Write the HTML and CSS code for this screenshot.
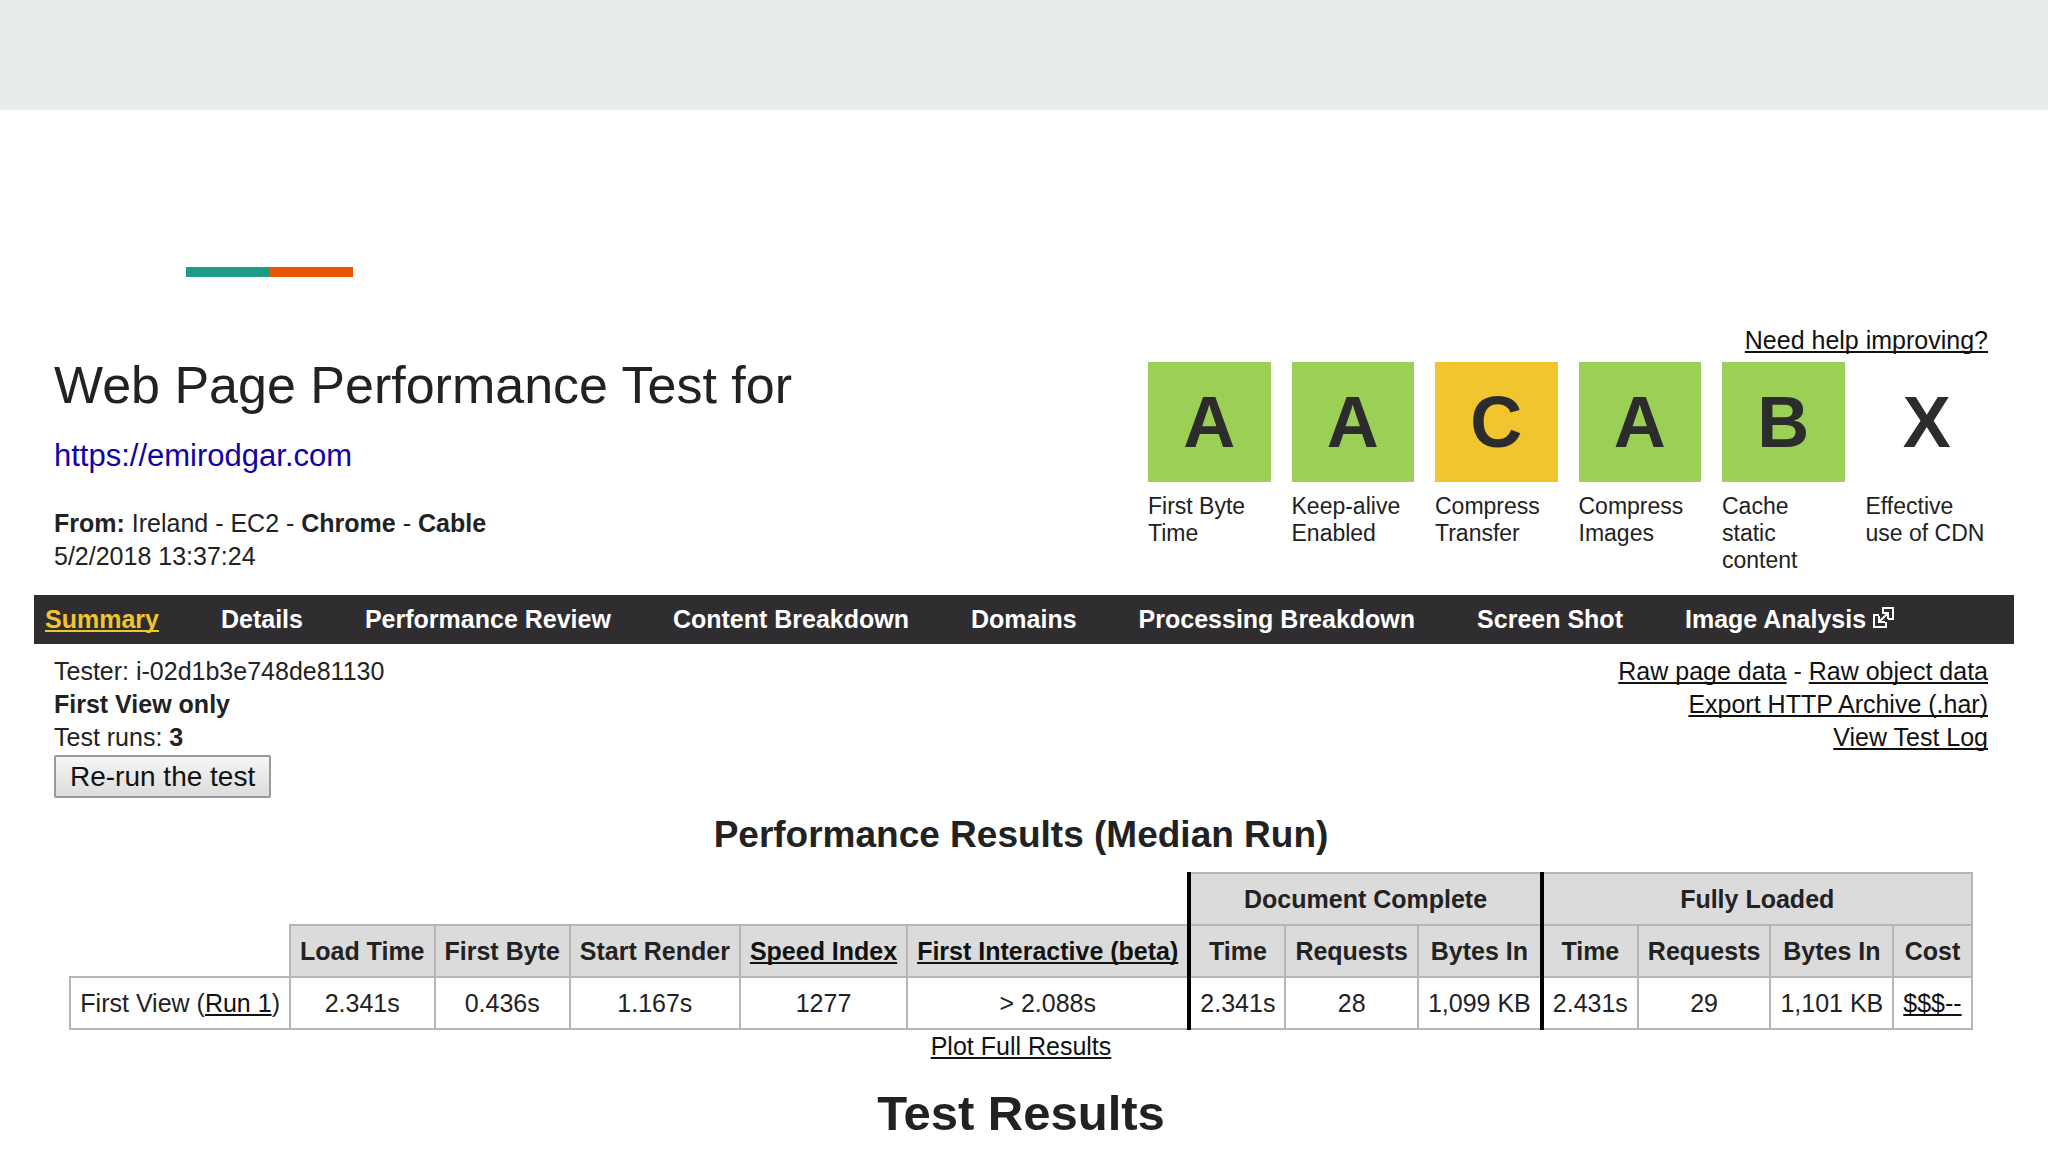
FILE: index.html
```html
<!DOCTYPE html>
<html lang="en">
<head>
    <meta charset="UTF-8">
    <meta name="viewport" content="width=device-width, initial-scale=1.0">
    <title>Web Page Performance Test</title>
    <link rel="stylesheet" href="styles.css">
</head>
<body>
    <div class="band"></div>
    <div class="accent"></div>

    <main class="report">
        <header class="report-header">
            <div class="test-info">
                <h1>Web Page Performance Test for</h1>
                <a class="test-url" href="#">https://emirodgar.com</a>
                <p><strong>From:</strong> Ireland - EC2 - <strong>Chrome</strong> - <strong>Cable</strong></p>
                <p>5/2/2018 13:37:24</p>
            </div>
            <div class="grades">
                <a class="help" href="#">Need help improving?</a>
                <ul>
                    <li><span class="grade good">A</span>First Byte Time</li>
                    <li><span class="grade good">A</span>Keep-alive Enabled</li>
                    <li><span class="grade average">C</span>Compress Transfer</li>
                    <li><span class="grade good">A</span>Compress Images</li>
                    <li><span class="grade good">B</span>Cache static content</li>
                    <li><span class="grade">X</span>Effective use of CDN</li>
                </ul>
            </div>
        </header>

        <nav>
            <a class="active" href="#">Summary</a>
            <a href="#">Details</a>
            <a href="#">Performance Review</a>
            <a href="#">Content Breakdown</a>
            <a href="#">Domains</a>
            <a href="#">Processing Breakdown</a>
            <a href="#">Screen Shot</a>
            <a href="#">Image Analysis <svg class="external" viewBox="0 0 21 21" aria-hidden="true">
                <path d="M6 8H1v12h12v-5M10 6V1h10v11h-5" />
                <path d="M6 15l9-9M9 6h6v6M6 9v6h6" />
            </svg></a>
        </nav>

        <div class="content">
            <div class="test-meta">
                <div>
                    <p>Tester: i-02d1b3e748de81130</p>
                    <p><strong>First View only</strong></p>
                    <p>Test runs: <strong>3</strong></p>
                    <button type="button">Re-run the test</button>
                </div>
                <div class="downloads">
                    <p><a href="#">Raw page data</a> - <a href="#">Raw object data</a></p>
                    <p><a href="#">Export HTTP Archive (.har)</a></p>
                    <p><a href="#">View Test Log</a></p>
                </div>
            </div>

            <h2>Performance Results (Median Run)</h2>
            <table>
                <thead>
                    <tr>
                        <td class="empty" colspan="6"></td>
                        <th class="divider" colspan="3">Document Complete</th>
                        <th class="divider" colspan="4">Fully Loaded</th>
                    </tr>
                    <tr>
                        <td class="empty"></td>
                        <th>Load Time</th>
                        <th>First Byte</th>
                        <th>Start Render</th>
                        <th><a href="#">Speed Index</a></th>
                        <th><a href="#">First Interactive (beta)</a></th>
                        <th class="divider">Time</th>
                        <th>Requests</th>
                        <th>Bytes In</th>
                        <th class="divider">Time</th>
                        <th>Requests</th>
                        <th>Bytes In</th>
                        <th>Cost</th>
                    </tr>
                </thead>
                <tbody>
                    <tr>
                        <td>First View (<a href="#">Run 1</a>)</td>
                        <td>2.341s</td>
                        <td>0.436s</td>
                        <td>1.167s</td>
                        <td>1277</td>
                        <td>&gt; 2.088s</td>
                        <td class="divider">2.341s</td>
                        <td>28</td>
                        <td>1,099 KB</td>
                        <td class="divider">2.431s</td>
                        <td>29</td>
                        <td>1,101 KB</td>
                        <td><a href="#">$$$--</a></td>
                    </tr>
                </tbody>
            </table>
            <p class="plot"><a href="#">Plot Full Results</a></p>

            <h2 class="results-title">Test Results</h2>
        </div>
    </main>
</body>
</html>
```
FILE: styles.css
```css
* {
    box-sizing: border-box;
}
body {
    margin: 0;
    background: #fff;
    color: #222;
    font-family: "Liberation Sans", Arial, sans-serif;
    font-size: 25px;
    line-height: 33px;
}
h1, h2, p, ul {
    margin: 0;
    padding: 0;
}
a {
    color: #111;
    text-decoration-thickness: 2px;
    text-underline-offset: 2px;
    text-decoration-skip-ink: none;
}

.band {
    height: 110px;
    background: #e8edeb;
}
.accent {
    width: 167px;
    height: 10px;
    margin: 157px 0 47px 186px;
    background: linear-gradient(to right, #1f9a86 84px, #e65802 84px);
}

.report {
    margin: 0 34px;
}
.report-header {
    display: flex;
    justify-content: space-between;
    padding: 0 26px 21px 20px;
}
.test-info {
    padding-top: 31px;
}
h1 {
    margin-bottom: 23px;
    font-size: 52px;
    font-weight: normal;
    line-height: 60px;
}
.test-url {
    display: block;
    margin-bottom: 33px;
    color: #1200a8;
    font-size: 31px;
    line-height: 36px;
    text-decoration: none;
}

.grades {
    text-align: right;
}
.grades ul {
    display: grid;
    grid-template-columns: repeat(6, 1fr);
    gap: 21px;
    width: 840px;
    margin-top: 5px;
    list-style: none;
    text-align: left;
    font-size: 23px;
    line-height: 27px;
}
.grade {
    display: block;
    height: 120px;
    margin-bottom: 11px;
    color: #2c2c2c;
    font-size: 72px;
    font-weight: bold;
    line-height: 120px;
    text-align: center;
}
.good {
    background: #9ccf55;
}
.average {
    background: #f1c52e;
}

nav {
    display: flex;
    gap: 62px;
    padding: 0 11px;
    background: #2f2d2f;
    line-height: 49px;
    white-space: nowrap;
}
nav a {
    color: #fff;
    font-weight: bold;
    text-decoration: none;
}
nav .active {
    color: #f1c52e;
    text-decoration: underline 2px;
}
.external {
    width: 21px;
    height: 21px;
    fill: none;
    stroke: #fff;
    stroke-width: 2;
}

.content {
    padding: 11px 26px 0 20px;
}
.test-meta {
    display: flex;
    justify-content: space-between;
}
.downloads {
    text-align: right;
}
button {
    display: block;
    height: 43px;
    margin-top: 1px;
    padding: 0 14px;
    border: 2px solid #999;
    border-radius: 2px;
    background: linear-gradient(#f6f6f6, #dcdcdc);
    color: #111;
    font-family: inherit;
    font-size: 28px;
}

h2 {
    margin: 16px 0;
    font-size: 37px;
    line-height: 42px;
    text-align: center;
}
table {
    margin: 0 auto;
    border-collapse: collapse;
    text-align: center;
    white-space: nowrap;
}
th, td {
    height: 52px;
    padding: 0 9px;
    border: 2px solid #b8b5b7;
}
th {
    background: #dcdbdc;
}
.empty {
    border: none;
}
.divider {
    border-left: 4px solid #000;
}
.plot {
    text-align: center;
}
.results-title {
    margin: 23px 0 0;
    font-size: 49px;
    line-height: 54px;
}
```
